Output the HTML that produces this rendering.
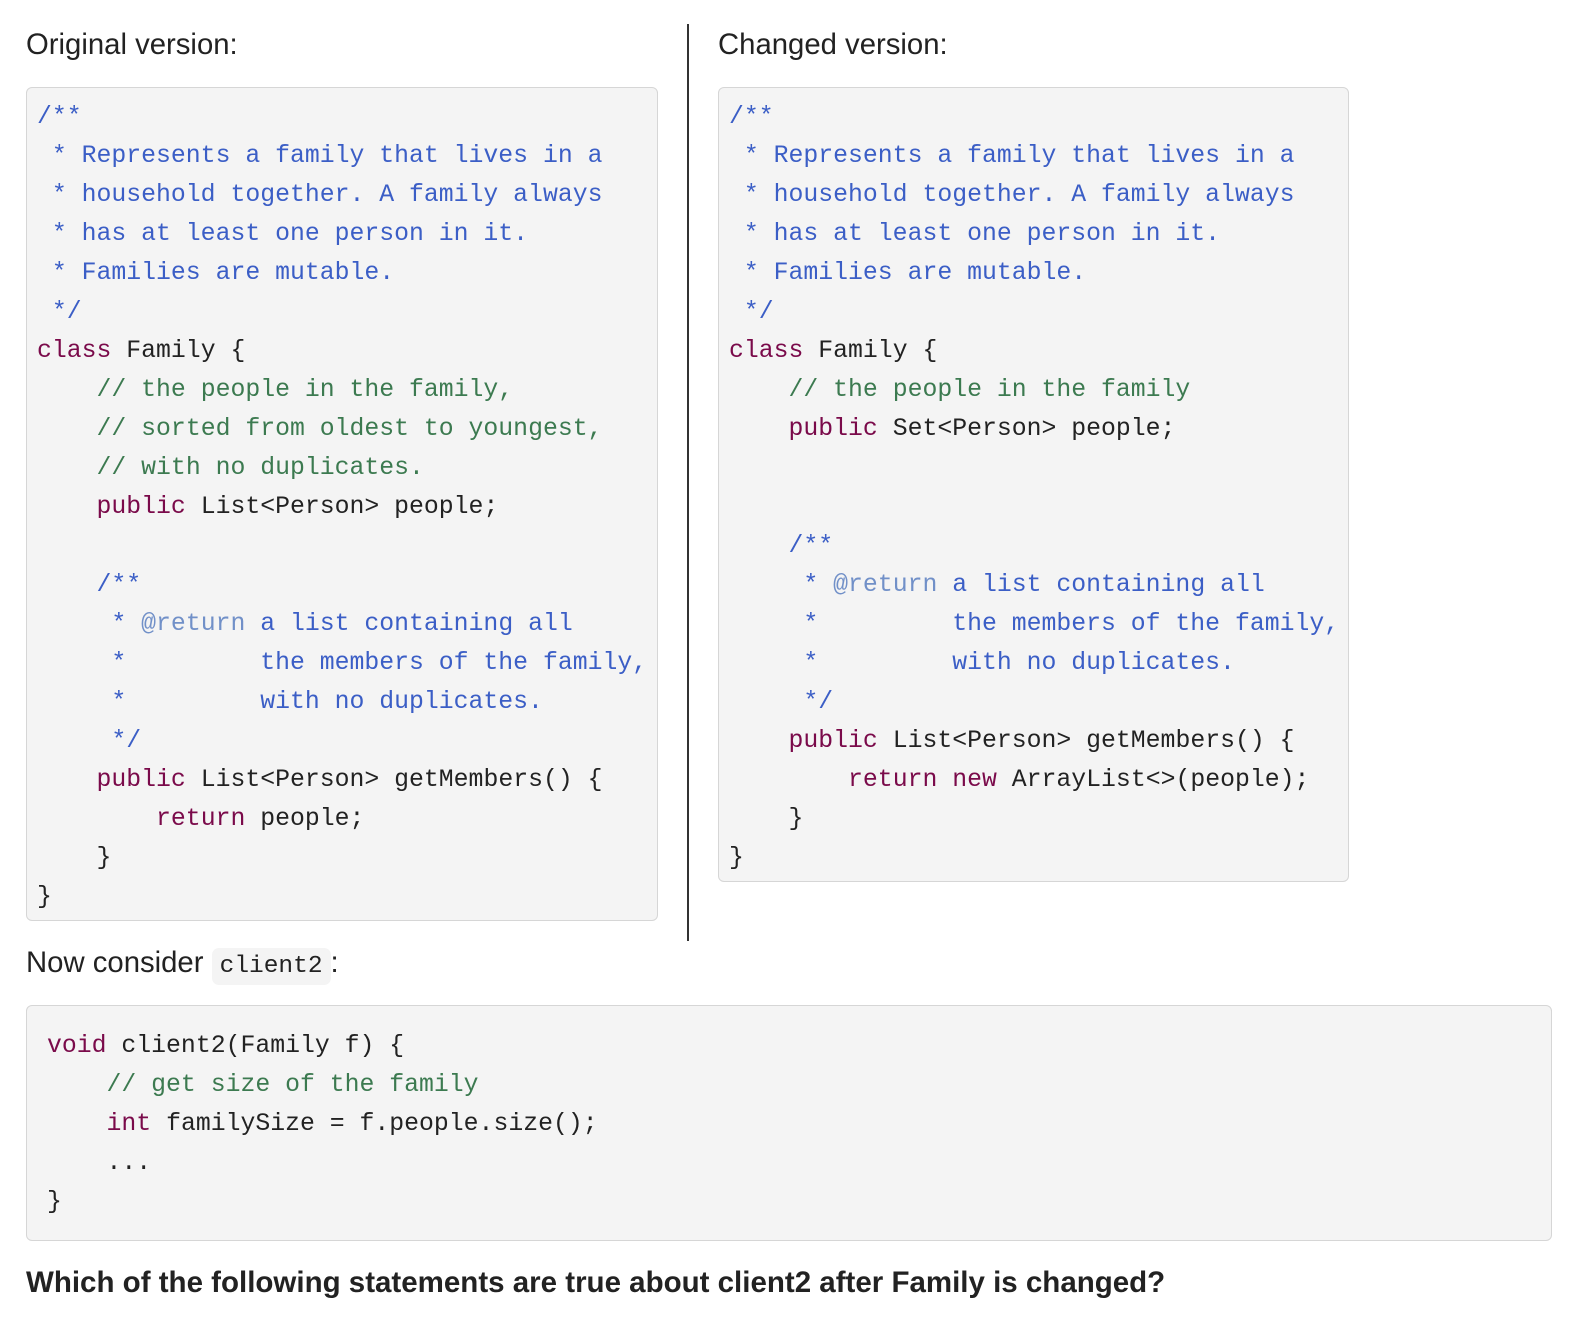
<!DOCTYPE html>
<html><head><meta charset="utf-8"><style>
body{margin:0;background:#fff;width:1581px;height:1322px;position:relative;font-family:"Liberation Sans",Arial,sans-serif;color:#222;overflow:hidden}
.h{position:absolute;font-size:29.3px;line-height:32px}
pre{position:absolute;margin:0;background:#f4f4f4;border:1.5px solid #d6d6d6;border-radius:6px;box-sizing:border-box;font-family:"Liberation Mono",monospace;font-size:24.8px;line-height:39px;color:#222;white-space:pre}
.d{color:#3b5ec6}.k{color:#7a0a4a}.c{color:#3c7a50}.t{color:#7190c8}
.div{position:absolute;left:687px;top:24px;width:2px;height:917px;background:#333}
code{font-family:"Liberation Mono",monospace;font-size:24.5px;background:#f4f4f4;border-radius:7px;padding:5px 8px}
</style></head><body>
<div class="h" style="left:26px;top:29px">Original version:</div>
<div class="h" style="left:718px;top:29px">Changed version:</div>
<div class="div"></div>
<pre style="left:26px;top:87px;width:632px;height:834px;padding:10px 0 0 10px;"><span class="d">/**
 * Represents a family that lives in a
 * household together. A family always
 * has at least one person in it.
 * Families are mutable.
 */</span>
<span class="k">class</span> Family {
    <span class="c">// the people in the family,</span>
    <span class="c">// sorted from oldest to youngest,</span>
    <span class="c">// with no duplicates.</span>
    <span class="k">public</span> List&lt;Person&gt; people;

    <span class="d">/**
     * <span class="t">@return</span> a list containing all
     *         the members of the family,
     *         with no duplicates.
     */</span>
    <span class="k">public</span> List&lt;Person&gt; getMembers() {
        <span class="k">return</span> people;
    }
}</pre>
<pre style="left:718px;top:87px;width:631px;height:795px;padding:10px 0 0 10px;"><span class="d">/**
 * Represents a family that lives in a
 * household together. A family always
 * has at least one person in it.
 * Families are mutable.
 */</span>
<span class="k">class</span> Family {
    <span class="c">// the people in the family</span>
    <span class="k">public</span> Set&lt;Person&gt; people;


    <span class="d">/**
     * <span class="t">@return</span> a list containing all
     *         the members of the family,
     *         with no duplicates.
     */</span>
    <span class="k">public</span> List&lt;Person&gt; getMembers() {
        <span class="k">return</span> <span class="k">new</span> ArrayList&lt;&gt;(people);
    }
}</pre>
<div class="h" style="left:26px;top:947px">Now consider <code>client2</code>:</div>
<pre style="left:26px;top:1005px;width:1526px;height:236px;padding:21px 0 0 20px;"><span class="k">void</span> client2(Family f) {
    <span class="c">// get size of the family</span>
    <span class="k">int</span> familySize = f.people.size();
    ...
}</pre>
<div class="h" style="left:26px;top:1267px;font-weight:bold;font-size:29.5px">Which of the following statements are true about client2 after Family is changed?</div>
</body></html>
